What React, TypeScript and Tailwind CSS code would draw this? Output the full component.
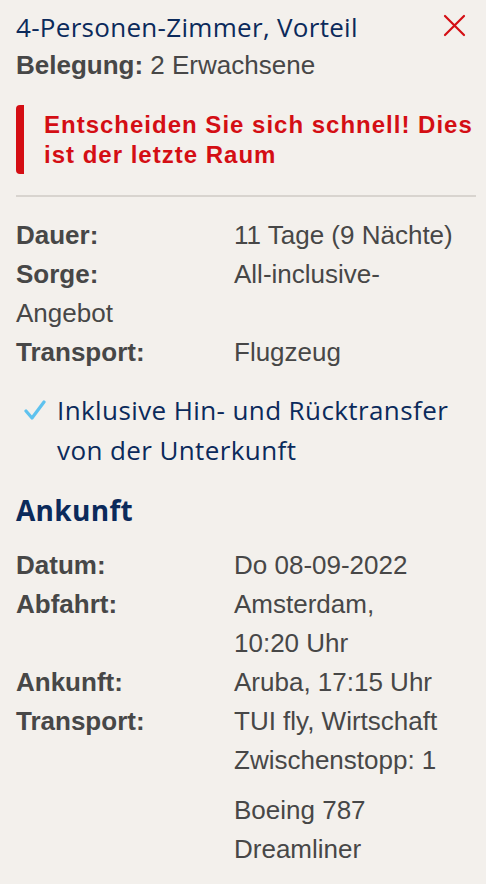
import React from 'react';

const navy = 'text-[#0b2a5b]';

const Row: React.FC<{ label: string; children: React.ReactNode; className?: string }> = ({ label, children, className }) => (
  <div className={`flex ${className ?? ''}`}>
    <span className="w-[218px] shrink-0 font-bold">{label}</span>
    <div className="w-[232px]">{children}</div>
  </div>
);

const App: React.FC = () => {
  return (
    <div className="min-h-screen bg-[#f3f0ec] pl-[16px] pr-[10px] pt-[8px] pb-[20px] text-[#474747] font-['Liberation_Sans',Arial,sans-serif]">
      {/* Header */}
      <div className="flex items-start justify-between">
        <h1 className={`text-[26px] leading-[38px] tracking-[0.3px] ${navy} font-['Open_Sans',sans-serif]`}>4-Personen-Zimmer, Vorteil</h1>
        <button className="mt-[6px] mr-[10px] p-0" aria-label="Schließen">
          <svg width="23" height="23" viewBox="0 0 23 23" fill="none" stroke="#d40e14" strokeWidth="2.2" strokeLinecap="round">
            <path d="M2 2 L21 21 M21 2 L2 21" />
          </svg>
        </button>
      </div>
      <p className="text-[26px] leading-[38px]">
        <span className="font-bold">Belegung:</span> 2 Erwachsene
      </p>

      {/* Warning */}
      <div className="mt-[21px] border-l-[8px] border-[#d40e14] rounded-[4px] pl-[20px] py-[4.5px]">
        <p className="text-[24px] leading-[30px] font-bold tracking-[1px] text-[#d40e14]">
          Entscheiden Sie sich schnell! Dies ist der letzte Raum
        </p>
      </div>

      <div className="mt-[21px] border-t-2 border-[#d8d4cf]" />

      {/* Details */}
      <div className="mt-[19px] text-[26px] leading-[39px]">
        <Row label="Dauer:">11 Tage (9 Nächte)</Row>
        <p>
          <span className="inline-block w-[218px] font-bold">Sorge:</span>All-inclusive-
          <br />
          Angebot
        </p>
        <Row label="Transport:">Flugzeug</Row>
      </div>

      <div className={`mt-[18px] flex items-start ${navy} font-['Open_Sans',sans-serif] text-[26px] leading-[40px] tracking-[0.4px]`}>
        <svg className="ml-[8px] mt-[9px] mr-[11px] shrink-0" width="22" height="22" viewBox="0 0 22 22" fill="none" stroke="#5ec2ee" strokeWidth="3.2" strokeLinecap="round" strokeLinejoin="round">
          <path d="M2 12 L8 19 L20 3" />
        </svg>
        <p>
          Inklusive Hin- und Rücktransfer
          <br />
          von der Unterkunft
        </p>
      </div>

      {/* Ankunft */}
      <h2 className={`mt-[20px] text-[28px] leading-[40px] tracking-[0.3px] font-bold ${navy} font-['Open_Sans',sans-serif]`}>Ankunft</h2>
      <div className="mt-[16px] text-[26px] leading-[39px]">
        <Row label="Datum:">Do 08-09-2022</Row>
        <Row label="Abfahrt:">
          Amsterdam,
          <br />
          10:20 Uhr
        </Row>
        <Row label="Ankunft:">Aruba, 17:15 Uhr</Row>
        <Row label="Transport:">
          <p>
            TUI fly, Wirtschaft
            <br />
            Zwischenstopp: 1
          </p>
          <p className="mt-[11px]">
            Boeing 787
            <br />
            Dreamliner
          </p>
        </Row>
      </div>
    </div>
  );
};

export default App;
